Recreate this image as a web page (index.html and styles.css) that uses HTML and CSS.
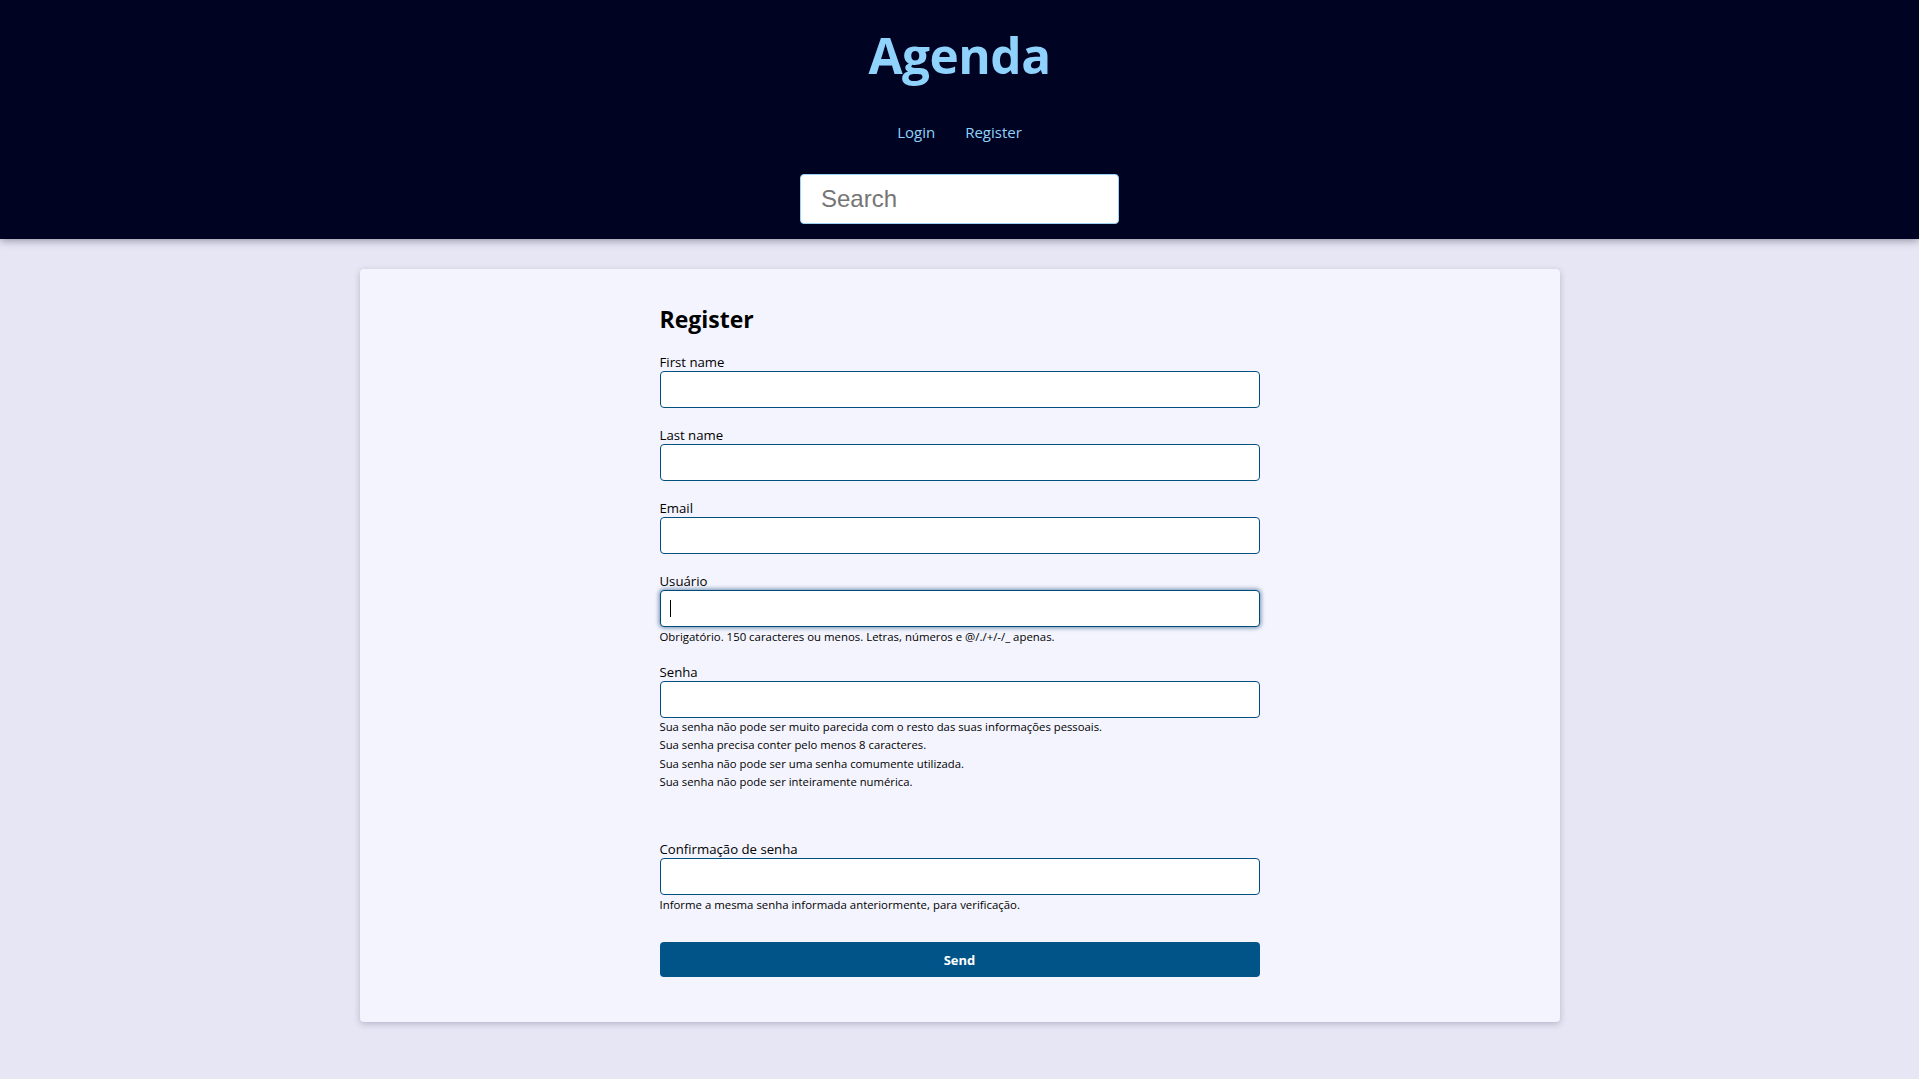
FILE: index.html
```html
<!DOCTYPE html>
<html lang="pt-br">
<head>
<meta charset="utf-8">
<title>Agenda</title>
<link rel="stylesheet" href="styles.css">
</head>
<body>
<header class="site-header">
  <h1 class="site-title">Agenda</h1>
  <nav class="site-nav">
    <a class="nav-link" href="#">Login</a>
    <a class="nav-link" href="#">Register</a>
  </nav>
  <form class="search-form">
    <input class="search-input" type="search" placeholder="Search">
  </form>
</header>
<main class="main">
  <section class="card">
    <form class="register-form">
      <h2 class="form-title">Register</h2>
      <div class="field">
        <label class="field-label">First name</label>
        <input class="field-input" type="text">
      </div>
      <div class="field">
        <label class="field-label">Last name</label>
        <input class="field-input" type="text">
      </div>
      <div class="field">
        <label class="field-label">Email</label>
        <input class="field-input" type="email">
      </div>
      <div class="field">
        <label class="field-label">Usuário</label>
        <div class="input-wrap">
          <input class="field-input is-focused" type="text">
          <span class="fake-caret"></span>
        </div>
        <span class="help">Obrigatório. 150 caracteres ou menos. Letras, números e @/./+/-/_ apenas.</span>
      </div>
      <div class="field field-spaced">
        <label class="field-label">Senha</label>
        <input class="field-input" type="password">
        <ul class="help-list">
          <li>Sua senha não pode ser muito parecida com o resto das suas informações pessoais.</li>
          <li>Sua senha precisa conter pelo menos 8 caracteres.</li>
          <li>Sua senha não pode ser uma senha comumente utilizada.</li>
          <li>Sua senha não pode ser inteiramente numérica.</li>
        </ul>
      </div>
      <div class="field">
        <label class="field-label">Confirmação de senha</label>
        <input class="field-input" type="password">
        <span class="help">Informe a mesma senha informada anteriormente, para verificação.</span>
      </div>
      <button class="send-btn" type="button">Send</button>
    </form>
  </section>
</main>
</body>
</html>
```

FILE: styles.css
```css
* { box-sizing: border-box; }

html, body {
  margin: 0;
  padding: 0;
}

body {
  background: #e6e6f4;
  font-family: "Open Sans", "Noto Sans", sans-serif;
  color: #000;
  min-height: 1079px;
}

.site-header {
  background: #000322;
  padding: 25px 0 15px;
  text-align: center;
  box-shadow: 0 2px 8px rgba(0, 0, 30, 0.35);
  position: relative;
}

.site-title {
  margin: 0;
  font-size: 49.5px;
  line-height: 60px;
  font-weight: 700;
  color: #8fd2fc;
  letter-spacing: -0.5px;
}

.site-nav {
  display: flex;
  justify-content: center;
  gap: 30px;
  margin-top: 36px;
}

.nav-link {
  color: #8fd2fc;
  text-decoration: none;
  font-size: 15px;
  line-height: 22px;
}

.search-form {
  margin-top: 31px;
  display: flex;
  justify-content: center;
}

.search-input {
  width: 319px;
  height: 50px;
  border: 1px solid #9cd3f5;
  border-radius: 4px;
  background: #fff;
  padding: 0 20px;
  font-family: "Liberation Sans", Arial, sans-serif;
  font-size: 24px;
  color: #333;
  outline: none;
}

.search-input::placeholder {
  color: #757575;
}

.main {
  padding: 30px 0 40px;
}

.card {
  width: 1200px;
  margin: 0 auto;
  background: #f4f4fe;
  border-radius: 4px;
  box-shadow: 0 2px 6px rgba(40, 40, 80, 0.25);
  padding: 34px 0 45px;
}

.register-form {
  width: 600px;
  margin: 0 auto;
  display: flex;
  flex-direction: column;
}

.form-title {
  margin: 0 0 18px;
  font-size: 23px;
  line-height: 32px;
  font-weight: 700;
  color: #000;
}

.field {
  display: flex;
  flex-direction: column;
  margin-bottom: 18px;
}

.field-label {
  font-size: 13.2px;
  line-height: 18px;
  color: #000;
}

.input-wrap {
  position: relative;
  display: flex;
}

.field-input {
  width: 100%;
  height: 37px;
  border: 1px solid #00507f;
  border-radius: 4px;
  background: #fff;
  padding: 0 10px;
  font-family: inherit;
  font-size: 14px;
  outline: none;
}

.field-input.is-focused {
  border-color: #004b78;
  box-shadow: 0 0 4px 1px rgba(0, 60, 110, 0.55);
}

.fake-caret {
  position: absolute;
  left: 10px;
  top: 10px;
  width: 1px;
  height: 17px;
  background: #000;
}

.help {
  font-size: 11.4px;
  line-height: 16px;
  margin-top: 2px;
  color: #000;
}

.help-list {
  list-style: none;
  margin: 0;
  padding: 0;
  font-size: 11.3px;
  line-height: 18.3px;
}

.field-spaced {
  margin-bottom: 49px;
}

.send-btn {
  margin-top: 11px;
  height: 35px;
  width: 100%;
  border: none;
  border-radius: 4px;
  background: #005487;
  color: #fff;
  font-family: inherit;
  font-weight: 700;
  font-size: 13px;
}
```
